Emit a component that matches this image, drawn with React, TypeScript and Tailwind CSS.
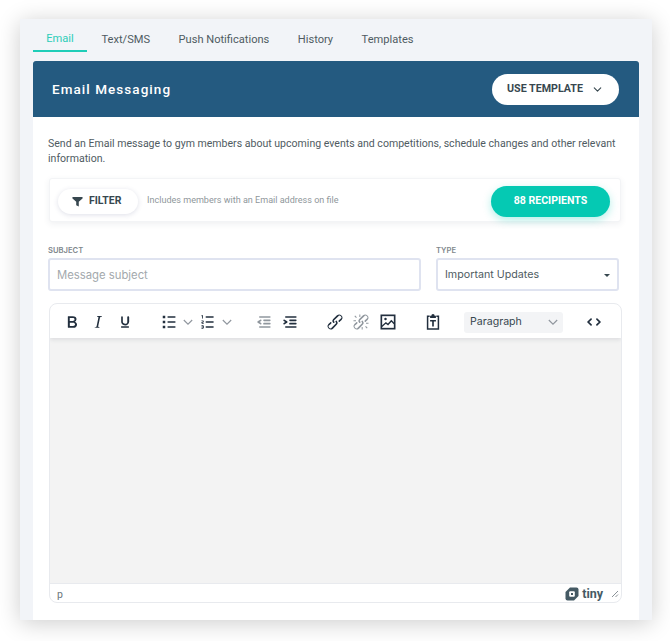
import React from 'react';
import { ChevronDown } from 'lucide-react';

const tabs = ['Text/SMS', 'Push Notifications', 'History', 'Templates'];

const paths: Record<string, string> = {
  bold: 'M7.8 19c-.3 0-.5 0-.6-.2l-.2-.5V5.7c0-.2 0-.4.2-.5l.6-.2h5c1.5 0 2.7.3 3.5 1 .7.6 1.1 1.4 1.1 2.5a3 3 0 01-.6 1.9c-.4.6-1 1-1.6 1.2.4.1.9.3 1.3.6s.8.7 1 1.2c.4.4.5 1 .5 1.6 0 1.3-.4 2.3-1.3 3-.8.7-2.1 1-3.8 1H7.8zm5-8.3c.6 0 1.2-.1 1.6-.5.4-.3.6-.7.6-1.3 0-1.1-.8-1.7-2.3-1.7H9.3v3.5h3.4zm.5 6c.7 0 1.3-.1 1.7-.4.4-.4.6-.9.6-1.5s-.2-1-.7-1.4c-.4-.3-1-.4-2-.4H9.4v3.8h4z',
  italic: 'M16.7 4.7l-.1.9h-.3c-.6 0-1 0-1.4.3-.3.3-.4.6-.5 1.1l-2.1 9.8v.6c0 .5.4.8 1.4.8h.2l-.2.8H8l.2-.8h.2c1.1 0 1.8-.5 2-1.5l2-9.8.1-.5c0-.6-.4-.8-1.4-.8h-.3l.2-.9h5.8z',
  underline: 'M16 5c.6 0 1 .4 1 1v5.5a4 4 0 01-.4 1.8l-1 1.4a5.3 5.3 0 01-5.5 1 4 4 0 01-2.4-2.4 4.6 4.6 0 01-.3-1.8V6c0-.6.4-1 1-1s1 .4 1 1v5.5c0 .3 0 .6.2 1l.4.7a3.4 3.4 0 002.4 1l1-.1c.3-.1.5-.3.7-.5l.5-.8.1-1.3V6c0-.6.4-1 1-1zM8 17h8c.6 0 1 .4 1 1s-.4 1-1 1H8a1 1 0 010-2z',
  bullets: 'M11 5h8c.6 0 1 .4 1 1s-.4 1-1 1h-8a1 1 0 010-2zm0 6h8c.6 0 1 .4 1 1s-.4 1-1 1h-8a1 1 0 010-2zm0 6h8c.6 0 1 .4 1 1s-.4 1-1 1h-8a1 1 0 010-2zM4.5 4.5h3v3h-3zm0 6h3v3h-3zm0 6h3v3h-3z',
  numbers: 'M10 17h8c.6 0 1 .4 1 1s-.4 1-1 1h-8a1 1 0 010-2zm0-6h8c.6 0 1 .4 1 1s-.4 1-1 1h-8a1 1 0 010-2zm0-6h8c.6 0 1 .4 1 1s-.4 1-1 1h-8a1 1 0 110-2zM6 4v3.5c0 .3-.2.5-.5.5a.5.5 0 01-.5-.5V5h-.5a.5.5 0 010-1H6zm-1 8.8l.2.2h1.3c.3 0 .5.2.5.5s-.2.5-.5.5H4.900a1 1 0 01-.9-1V13c0-.4.3-.8.6-1l1.200-.4.2-.3a.2.2 0 00-.2-.2H4.500a.5.5 0 01-.5-.5c0-.3.2-.5.5-.5h1.600c.5 0 .9.4.9 1v.1c0 .4-.3.8-.6 1l-1.200.4-.2.3zM7 17v2c0 .6-.4 1-1 1H4.500a.5.5 0 010-1h1.200c.2 0 .3-.1.3-.3 0-.2-.1-.3-.3-.3H4.400a.4.4 0 110-.8h1.300c.2 0 .3-.1.3-.3 0-.2-.1-.3-.3-.3H4.500a.5.5 0 110-1H6c.6 0 1 .4 1 1z',
  outdent: 'M7 5h12c.6 0 1 .4 1 1s-.4 1-1 1H7a1 1 0 110-2zm5 4h7c.6 0 1 .4 1 1s-.4 1-1 1h-7a1 1 0 010-2zm0 4h7c.6 0 1 .4 1 1s-.4 1-1 1h-7a1 1 0 010-2zm-5 4h12a1 1 0 010 2H7a1 1 0 010-2zm1.600-3.800a1 1 0 01-1.200 1.600l-3-2a1 1 0 010-1.600l3-2a1 1 0 011.200 1.600L6.800 12l1.800 1.200z',
  indent: 'M7 5h12c.6 0 1 .4 1 1s-.4 1-1 1H7a1 1 0 110-2zm5 4h7c.6 0 1 .4 1 1s-.4 1-1 1h-7a1 1 0 010-2zm0 4h7c.6 0 1 .4 1 1s-.4 1-1 1h-7a1 1 0 010-2zm-5 4h12a1 1 0 010 2H7a1 1 0 010-2zm-2.600-3.800L6.200 12l-1.800-1.200a1 1 0 011.200-1.600l3 2a1 1 0 010 1.600l-3 2a1 1 0 11-1.200-1.600z',
  link: 'M6.200 12.300a1 1 0 011.400 1.400l-2 2a2 2 0 102.600 2.800l4.800-4.800a1 1 0 000-1.400 1 1 0 111.400-1.300 2.900 2.900 0 010 4L9.600 20a3.900 3.900 0 01-5.500-5.500l2-2zm11.600-.6a1 1 0 01-1.400-1.400l2-2a2 2 0 10-2.600-2.800L11 9.900a1 1 0 000 1.400 1 1 0 11-1.400 1.300 2.900 2.900 0 010-4L14.400 4a3.900 3.900 0 015.500 5.500l-2 2z',
  unlink: 'M6.200 12.300a1 1 0 011.400 1.400l-2 2a2 2 0 102.600 2.800l4.800-4.800a1 1 0 000-1.400 1 1 0 111.400-1.300 2.900 2.900 0 010 4L9.600 20a3.900 3.900 0 01-5.500-5.500l2-2zm11.600-.6a1 1 0 01-1.400-1.400l2-2a2 2 0 10-2.600-2.800L11 9.900a1 1 0 000 1.400 1 1 0 11-1.400 1.300 2.900 2.900 0 010-4L14.400 4a3.900 3.900 0 015.500 5.500l-2 2zM7 6.200l-2-2-.9.9 2 2zM10 3v3h1.200V3zM3 10v1.200h3V10zM17 17.800l2 2 .9-.9-2-2zM14 21v-3h-1.200v3zM21 14v-1.200h-3V14z',
};

const TinyIcon = ({ name, muted, className }: { name: string; muted?: boolean; className?: string }) => (
  <svg width="20" height="20" viewBox="0 0 24 24" className={`shrink-0 ${muted ? 'fill-[#222f3e]/50' : 'fill-[#222f3e]'} ${className ?? ''}`}>
    <path d={paths[name]} />
  </svg>
);

const Caret = ({ className }: { className: string }) => (
  <svg width="10" height="10" viewBox="0 0 10 10" className={`shrink-0 ${className}`} fill="none" stroke="#8f959d" strokeWidth="1.1">
    <path d="M0.800 3l4.200 4.200 4.200-4.200" />
  </svg>
);

const Funnel = () => (
  <svg width="11" height="11" viewBox="0 0 12 12" className="fill-[#37474f]">
    <path d="M0.500 1h11v1.600L7.400 6.400V11.500L4.600 10V6.400L0.500 2.600z" />
  </svg>
);

const TinyLogo = () => (
  <svg width="14" height="14" viewBox="0 0 14 14">
    <path d="M5 0.500h6.500a2 2 0 012 2V9l-4.500 4.500H2.500a2 2 0 01-2-2V5z" fill="#455a64" />
    <rect x="4.200" y="4.200" width="5.600" height="5.600" rx="1" fill="#fff" />
    <rect x="6" y="6" width="2" height="2" fill="#455a64" />
  </svg>
);

export default function App() {
  return (
    <div className="w-[670px] h-[641px] bg-white pt-[19px] pl-[20px] font-['Roboto',sans-serif]">
      <div className="w-[632px] h-[601px] bg-[#f2f4f8] px-[13px] shadow-[0_3px_22px_rgba(0,0,0,0.2)]">
        {/* Tabs */}
        <div className="flex h-[42px] text-[11.1px] text-[#4f5b62]">
          <div className="w-[54px] h-[33px] pt-[10px] flex items-center justify-center text-[#2dcdb9] border-b-2 border-[#1fcdb8]">Email</div>
          {tabs.map((tab, i) => (
            <div key={tab} className={`h-[33px] pt-[8px] mt-[1px] flex items-center ${i === 0 ? 'ml-[14.5px]' : 'ml-[28.5px]'}`}>{tab}</div>
          ))}
        </div>

        <div className="h-[559px] bg-white">
          {/* Header */}
          <div className="h-[56px] bg-[#245a80] rounded-t-[3px] flex items-center justify-between pl-[19px] pr-[20px]">
            <span className="text-white text-[13.5px] font-medium tracking-[1.05px]">Email Messaging</span>
            <div className="w-[127px] h-[31px] bg-white rounded-full flex items-center pl-[15px] gap-[8px] text-[#37474f] text-[10.7px] font-bold">
              USE TEMPLATE
              <ChevronDown size={13} strokeWidth={2} />
            </div>
          </div>

          <div className="px-[15px]">
            <p className="pt-[19px] text-[10.55px] leading-[15px] text-[#4f5b62]">
              Send an Email message to gym members about upcoming events and competitions, schedule changes and other relevant information.
            </p>

            {/* Filter bar */}
            <div className="mt-[12px] ml-[1px] w-[572px] h-[44px] bg-white rounded-[3px] border border-[#f3f4f6] shadow-[0_2px_6px_rgba(50,60,90,0.08)] flex items-center pl-[8px] pr-[10px] pt-[2px]">
              <div className="w-[80px] h-[25px] rounded-full bg-white shadow-[0_1px_5px_rgba(70,80,130,0.18)] flex items-center pl-[14px] gap-[6px] text-[#37474f] text-[10.5px] font-bold">
                <Funnel />
                FILTER
              </div>
              <span className="ml-[9px] text-[9.05px] text-[#8f979b]">Includes members with an Email address on file</span>
              <div className="ml-auto w-[119px] h-[31px] rounded-full bg-[#05c9b3] shadow-[0_3px_8px_rgba(5,201,179,0.3)] flex items-center justify-center text-white text-[10.55px] font-bold">
                88 RECIPIENTS
              </div>
            </div>

            {/* Subject + type */}
            <div className="mt-[23px] flex gap-[15px] font-['Inter',sans-serif]">
              <div className="w-[373px]">
                <div className="text-[7.6px] font-semibold text-[#7e878c] leading-[10px] mb-[3px] pt-[1px]">SUBJECT</div>
                <div className="h-[33px] -mt-[1px] rounded-[3px] border-2 border-[#dfe3f0] bg-white flex items-center pl-[7px] pt-[1px] text-[11.3px] text-[#a3a9ad]">Message subject</div>
              </div>
              <div className="w-[183px]">
                <div className="text-[7.6px] font-semibold text-[#7e878c] leading-[10px] mb-[3px] pt-[1px]">TYPE</div>
                <div className="h-[33px] -mt-[1px] rounded-[3px] border-2 border-[#dfe3f0] bg-white flex items-center justify-between pl-[7px] pr-[7px] pt-[1px] text-[10.7px] text-[#4f5b62]">
                  Important Updates
                  <span className="w-0 h-0 border-x-[3px] border-x-transparent border-t-[3px] border-t-[#37474f]" />
                </div>
              </div>
            </div>

            {/* Editor */}
            <div className="mt-[12px] ml-[1px] w-[573px] h-[300px] rounded-[8px] border border-[#e8eaee] bg-white overflow-hidden flex flex-col">
              <div className="h-[34px] shrink-0 flex items-center shadow-[0_2px_4px_rgba(40,50,70,0.1)] z-10 relative pl-[12px] pt-[2px]">
                <TinyIcon name="bold" />
                <TinyIcon name="italic" className="ml-[5.5px]" />
                <TinyIcon name="underline" className="ml-[7px]" />
                <TinyIcon name="bullets" className="ml-[24.5px]" />
                <Caret className="ml-[3.5px]" />
                <TinyIcon name="numbers" className="ml-[5.5px]" />
                <Caret className="ml-[3.5px]" />
                <TinyIcon name="outdent" muted className="ml-[22.5px]" />
                <TinyIcon name="indent" className="ml-[6px]" />
                <TinyIcon name="link" className="ml-[25px]" />
                <TinyIcon name="unlink" muted className="ml-[6px]" />
                <svg width="20" height="20" viewBox="0 0 24 24" className="shrink-0 ml-[6.5px]" fill="none" stroke="#222f3e">
                  <rect x="4" y="4" width="16" height="16" strokeWidth="2" />
                  <path d="M4.500 17.500l5-4.500 2.500 2 4-4.500 3.500 3.500" strokeWidth="1.700" />
                  <circle cx="9" cy="8.500" r="1.500" fill="#222f3e" stroke="none" />
                </svg>
                <svg width="20" height="20" viewBox="0 0 24 24" className="shrink-0 ml-[25px]" fill="none" stroke="#222f3e" strokeWidth="1.800">
                  <path d="M8 5H5.500v15.500h13V5H16" />
                  <path d="M8.500 7.200V4.500H10a2 2 0 014 0h1.500v2.700z" fill="#222f3e" stroke="none" />
                  <path d="M8.500 10.500h7M12 10.500v7" strokeWidth="2" />
                </svg>
                <div className="ml-[21.5px] w-[98.5px] h-[21px] rounded-[3px] bg-[#f3f4f6] flex items-center justify-between pl-[6px] pr-[5px] text-[10.6px] text-[#37474f] font-['Inter',sans-serif]">
                  Paragraph
                  <Caret className="" />
                </div>
                <svg width="20" height="20" viewBox="0 0 24 24" className="shrink-0 ml-[21px]" fill="none" stroke="#222f3e" strokeWidth="2" strokeLinecap="round">
                  <path d="M8.500 8.500L5 12l3.500 3.500M15.500 8.500L19 12l-3.500 3.500" />
                </svg>
              </div>
              <div className="flex-1 bg-[#f3f3f3]" />
              <div className="h-[19px] shrink-0 border-t border-[#e8eaee] flex items-center justify-between pl-[7px] pr-[2px] pt-[3px] text-[10.5px] text-[#6b757a]">
                p
                <div className="flex items-center gap-[3px] -mt-[1px]">
                  <TinyLogo />
                  <span className="text-[12.5px] font-bold text-[#455a64] leading-none">tiny</span>
                  <svg width="8" height="8" viewBox="0 0 8 8" className="ml-[5px] stroke-[#8a9297]">
                    <path d="M1 7L7 1M4.500 7L7 4.500" strokeWidth="1" />
                  </svg>
                </div>
              </div>
            </div>
          </div>
        </div>
      </div>
    </div>
  );
}
